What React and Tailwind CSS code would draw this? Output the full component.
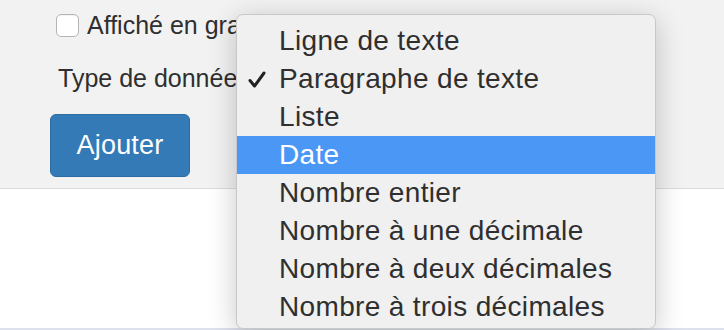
const OPTIONS = [
  'Ligne de texte',
  'Paragraphe de texte',
  'Liste',
  'Date',
  'Nombre entier',
  'Nombre à une décimale',
  'Nombre à deux décimales',
  'Nombre à trois décimales',
];

const SELECTED = 1;
const HIGHLIGHTED = 3;

const CheckMark = () => (
  <svg width="18" height="18" viewBox="0 0 18 18" className="absolute left-[11px] top-[11px]">
    <path d="M2 9.5 L6.5 15 L16 2" fill="none" stroke="#222" strokeWidth="3" strokeLinecap="round" strokeLinejoin="round" />
  </svg>
);

export default function App() {
  return (
    <div className="relative w-[724px] h-[330px] overflow-hidden bg-white font-['Liberation_Sans',Arial,sans-serif]">
      {/* Form panel */}
      <div className="h-[189px] bg-[#f2f2f2] border-b border-[#dcdcdc] pl-[56px] pt-[14px] text-[#2f2f2f]">
        <div className="flex items-center h-[23px]">
          <span className="w-[23px] h-[23px] rounded-[5px] border border-[#b5b5b5] bg-white shadow-[inset_0_1px_1px_rgba(0,0,0,0.05)]"></span>
          <span className="ml-[8px] text-[25px] leading-[23px] whitespace-nowrap">Affiché en graphique</span>
        </div>
        <div className="mt-[26px] ml-[2px] text-[25px] leading-[30px] whitespace-nowrap">Type de données</div>
        <button className="mt-[21px] -ml-[6px] w-[140px] h-[63px] rounded-[6px] bg-[#337ab7] border border-[#2e6da4] text-white text-[27px] leading-none tracking-[0.2px]">
          Ajouter
        </button>
      </div>

      {/* Bottom strip */}
      <div className="absolute left-0 right-0 bottom-0 h-[2px] bg-[#dde0ed]"></div>

      {/* Open select menu */}
      <div className="absolute left-[236px] top-[14px] w-[420px] h-[315px] rounded-[7px] bg-[#f0f0f0] border border-[#c8c8c8] shadow-[0_6px_28px_rgba(0,0,0,0.22)] pt-[7px] overflow-hidden">
        {OPTIONS.map((opt, i) => (
          <div
            key={opt}
            className={`relative h-[38px] pl-[42px] text-[28px] leading-[38px] tracking-[0.35px] whitespace-nowrap ${
              i === HIGHLIGHTED ? 'bg-[#4a97f6] text-white' : 'text-[#2f2f2f]'
            }`}
          >
            {i === SELECTED && <CheckMark />}
            {opt}
          </div>
        ))}
      </div>
    </div>
  );
}
